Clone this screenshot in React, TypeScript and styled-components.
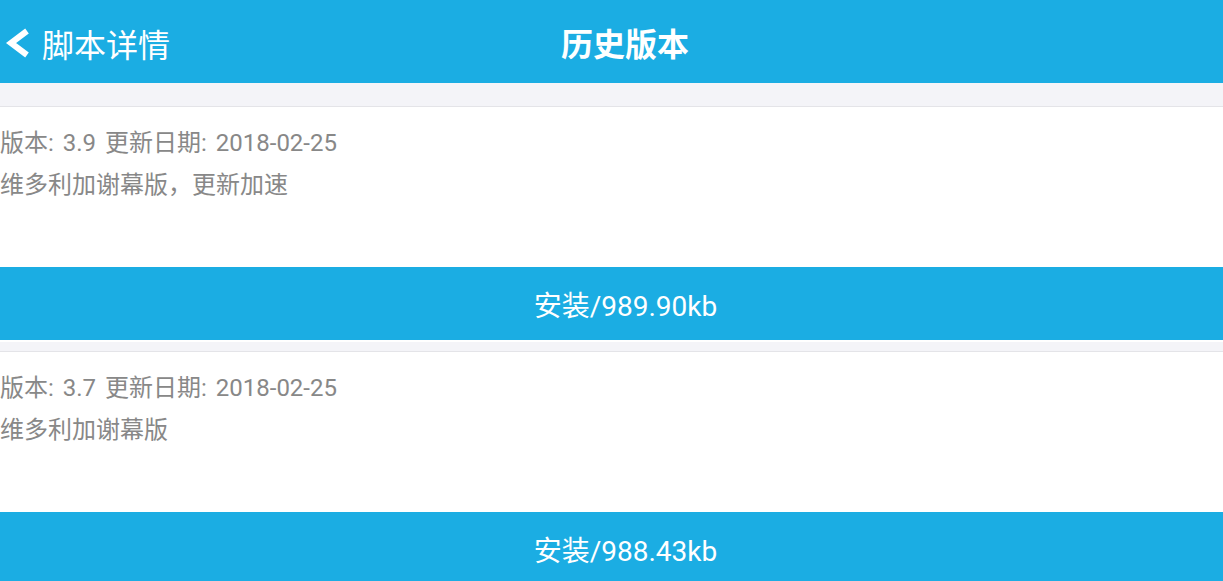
import React from 'react';
import styled, { createGlobalStyle } from 'styled-components';

const GlobalStyle = createGlobalStyle`
  html, body {
    margin: 0;
    padding: 0;
    background: #f4f4f8;
    font-family: Roboto, "Noto Sans CJK SC", "Noto Sans", sans-serif;
  }
`;

const versions = [
  { version: '3.9', date: '2018-02-25', note: '维多利加谢幕版，更新加速', size: '989.90kb' },
  { version: '3.7', date: '2018-02-25', note: '维多利加谢幕版', size: '988.43kb' },
];

const App = () => {
  return (
    <>
      <GlobalStyle />
      <Page>
        <Header>
          <BackButton>
            <svg width="28" height="32" viewBox="0 0 28 32">
              <polyline
                points="25,4 9,16 25,28"
                fill="none"
                stroke="#fff"
                strokeWidth="6"
                strokeLinejoin="miter"
              />
            </svg>
            <span>脚本详情</span>
          </BackButton>
          <Title>历史版本</Title>
        </Header>
        <List>
          {versions.map((v) => (
            <Item key={v.version}>
              <Info>
                <Line>版本: {v.version} 更新日期: {v.date}</Line>
                <Line>{v.note}</Line>
              </Info>
              <InstallButton>安装/{v.size}</InstallButton>
            </Item>
          ))}
        </List>
      </Page>
    </>
  );
};

const Page = styled.div`
  width: 100%;
  min-height: 100vh;
  background: #f4f4f8;
`;

const Header = styled.header`
  position: relative;
  height: 83px;
  background: #1badE3;
  display: flex;
  align-items: center;
  justify-content: center;
  color: #fff;
`;

const BackButton = styled.div`
  position: absolute;
  left: 2px;
  top: 0;
  bottom: 0;
  display: flex;
  align-items: center;
  gap: 12px;
  font-size: 32px;
  padding-top: 2px;

  svg {
    display: block;
    margin-top: 0;
  }
`;

const Title = styled.h1`
  margin: 0 0 0 27px;
  font-size: 32px;
  font-weight: 700;
`;

const List = styled.div`
  display: flex;
  flex-direction: column;
  gap: 9px;
  padding-top: 23px;
`;

const Item = styled.section`
  background: #fff;
  border-top: 1px solid #e4e4e8;
  border-bottom: 2px solid #fff;
`;

const Info = styled.div`
  height: 160px;
  box-sizing: border-box;
  padding-top: 15px;
  color: #888;
  font-size: 24px;
  word-spacing: 3px;
`;

const Line = styled.div`
  line-height: 42px;
`;

const InstallButton = styled.button`
  display: block;
  width: 100%;
  height: 73px;
  border: none;
  margin: 0;
  padding: 0 0 0 28px;
  background: #1badE3;
  color: #fff;
  font-family: inherit;
  font-size: 28px;
`;

export default App;
